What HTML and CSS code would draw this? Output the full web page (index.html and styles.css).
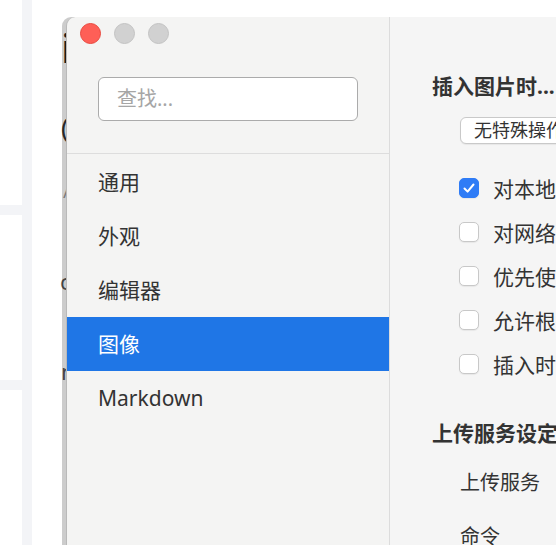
FILE: index.html
```html
<!DOCTYPE html>
<html lang="zh">
<head>
<meta charset="utf-8">
<title>偏好设置</title>
<link rel="stylesheet" href="styles.css">
</head>
<body>
<div class="cards">
  <div class="card c1"></div>
  <div class="card c2"></div>
  <div class="card c3"></div>
</div>
<div class="behind">
  <div class="frag f1">ii</div>
  <div class="frag f2">((</div>
  <div class="frag f3">//</div>
  <div class="frag f4">oo</div>
  <div class="frag f5">nn</div>
</div>
<div class="window">
  <aside class="sidebar">
    <div class="lights">
      <span class="light red"></span>
      <span class="light gray"></span>
      <span class="light gray"></span>
    </div>
    <div class="search-wrap">
      <div class="search">查找...</div>
    </div>
    <ul class="menu">
      <li class="item">通用</li>
      <li class="item">外观</li>
      <li class="item">编辑器</li>
      <li class="item active">图像</li>
      <li class="item">Markdown</li>
    </ul>
  </aside>
  <main class="pane">
    <h2 class="title">插入图片时...</h2>
    <div class="select">无特殊操作</div>
    <ul class="checks">
      <li class="check"><span class="box on"><svg viewBox="0 0 20 20" width="20" height="20"><path d="M5.5 10.5 L8.6 13.6 L14.5 6.5" fill="none" stroke="#fff" stroke-width="2" stroke-linecap="round" stroke-linejoin="round"/></svg></span><span class="label">对本地位置的图片应用上述规则</span></li>
      <li class="check"><span class="box"></span><span class="label">对网络位置的图片应用上述规则</span></li>
      <li class="check"><span class="box"></span><span class="label">优先使用相对路径</span></li>
      <li class="check"><span class="box"></span><span class="label">允许根据 YAML 设置自动上传图片</span></li>
      <li class="check"><span class="box"></span><span class="label">插入时自动转义图片 URL</span></li>
    </ul>
    <h2 class="title t2">上传服务设定</h2>
    <div class="field">上传服务</div>
    <div class="field f-cmd">命令</div>
  </main>
</div>
</body>
</html>
```

FILE: styles.css
```css
* { box-sizing: border-box; }
html, body { margin: 0; padding: 0; }
body {
  width: 556px;
  height: 545px;
  overflow: hidden;
  background: #ffffff;
  display: flex;
  font-family: "Noto Sans", "Noto Sans CJK SC", sans-serif;
  color: #333333;
}
.cards {
  width: 32px;
  flex: none;
  background: #f3f4f7;
  padding-right: 10px;
  display: flex;
  flex-direction: column;
  gap: 10px;
}
.card { background: #ffffff; }
.c1 { height: 205px; }
.c2 { height: 165px; }
.c3 { flex: 1; }
.behind {
  width: 34px;
  flex: none;
  overflow: hidden;
  white-space: nowrap;
  color: #222;
}
.frag { padding-left: 29px; line-height: 1; }
.f1 { font-size: 40px; margin-top: 28px; height: 40px; letter-spacing: 10px; }
.f2 { font-size: 26px; margin-top: 46px; height: 60px; letter-spacing: 10px; color: #333; }
.f3 { font-size: 18px; margin-top: 8px; color: #999; height: 88px; padding-left: 31px; }
.f4 { font-size: 22px; margin-top: 0; color: #555; height: 90px; padding-left: 28px; }
.f5 { font-size: 22px; margin-top: 0; color: #555; padding-left: 29px; }
.window {
  flex: 1;
  margin-top: 17px;
  display: flex;
  background: #f4f4f3;
  border-left: 1px solid #b9b9b9;
  border-top-left-radius: 9px;
  box-shadow: -4px 0 0 rgba(0, 0, 0, 0.2);
  min-width: 0;
}
.sidebar {
  width: 323px;
  flex: none;
  border-right: 1px solid #dcdcdc;
  display: flex;
  flex-direction: column;
}
.lights {
  display: flex;
  gap: 13px;
  padding: 6px 0 0 13px;
}
.light {
  width: 21px;
  height: 21px;
  border-radius: 50%;
  display: block;
}
.light.red { background: #fe5f57; border: 1px solid #e9493f; }
.light.gray { background: #d1d1d1; border: 1px solid #c3c3c3; }
.search-wrap {
  padding: 33px 31px 32px 31px;
  border-bottom: 1px solid #dddddd;
}
.search {
  height: 44px;
  background: #ffffff;
  border: 1px solid #ababab;
  border-radius: 6px;
  padding-left: 18px;
  font-size: 20px;
  line-height: 42px;
  color: #a6a6a6;
}
.menu {
  list-style: none;
  margin: 1px 0 0 0;
  padding: 0;
}
.item {
  height: 54px;
  line-height: 54px;
  padding-left: 31px;
  font-size: 21px;
  color: #333333;
}
.item.active {
  background: #1f76e6;
  color: #ffffff;
}
.pane {
  flex: 1;
  min-width: 0;
  background: #f5f5f5;
  padding: 55px 0 0 42px;
  white-space: nowrap;
  overflow: hidden;
}
.title {
  margin: 0;
  font-size: 21px;
  font-weight: 700;
  line-height: 28px;
  color: #333333;
}
.select {
  margin: 17px 0 0 28px;
  height: 27px;
  width: 160px;
  background: #ffffff;
  border: 1px solid #c9c9c9;
  border-radius: 6px;
  font-size: 18px;
  line-height: 25px;
  padding-left: 13px;
  color: #333;
  box-shadow: 0 1px 1px rgba(0,0,0,0.06);
}
.checks {
  list-style: none;
  margin: 22px 0 0 27px;
  padding: 0;
}
.check {
  height: 44px;
  display: flex;
  align-items: center;
  gap: 14px;
  font-size: 21px;
  color: #333;
}
.box {
  width: 20px;
  height: 20px;
  flex: none;
  border-radius: 5px;
  background: #ffffff;
  border: 1px solid #c8c8c8;
  box-shadow: 0 1px 1px rgba(0,0,0,0.06);
  display: block;
}
.box svg { display: block; margin: -1px; }
.box.on { background: #2f7cf6; border-color: #2f7cf6; }
.t2 { margin-top: 33px; }
.field {
  margin: 22px 0 0 28px;
  font-size: 20px;
  line-height: 28px;
  color: #333;
}
.f-cmd { margin-top: 26px; }
```
